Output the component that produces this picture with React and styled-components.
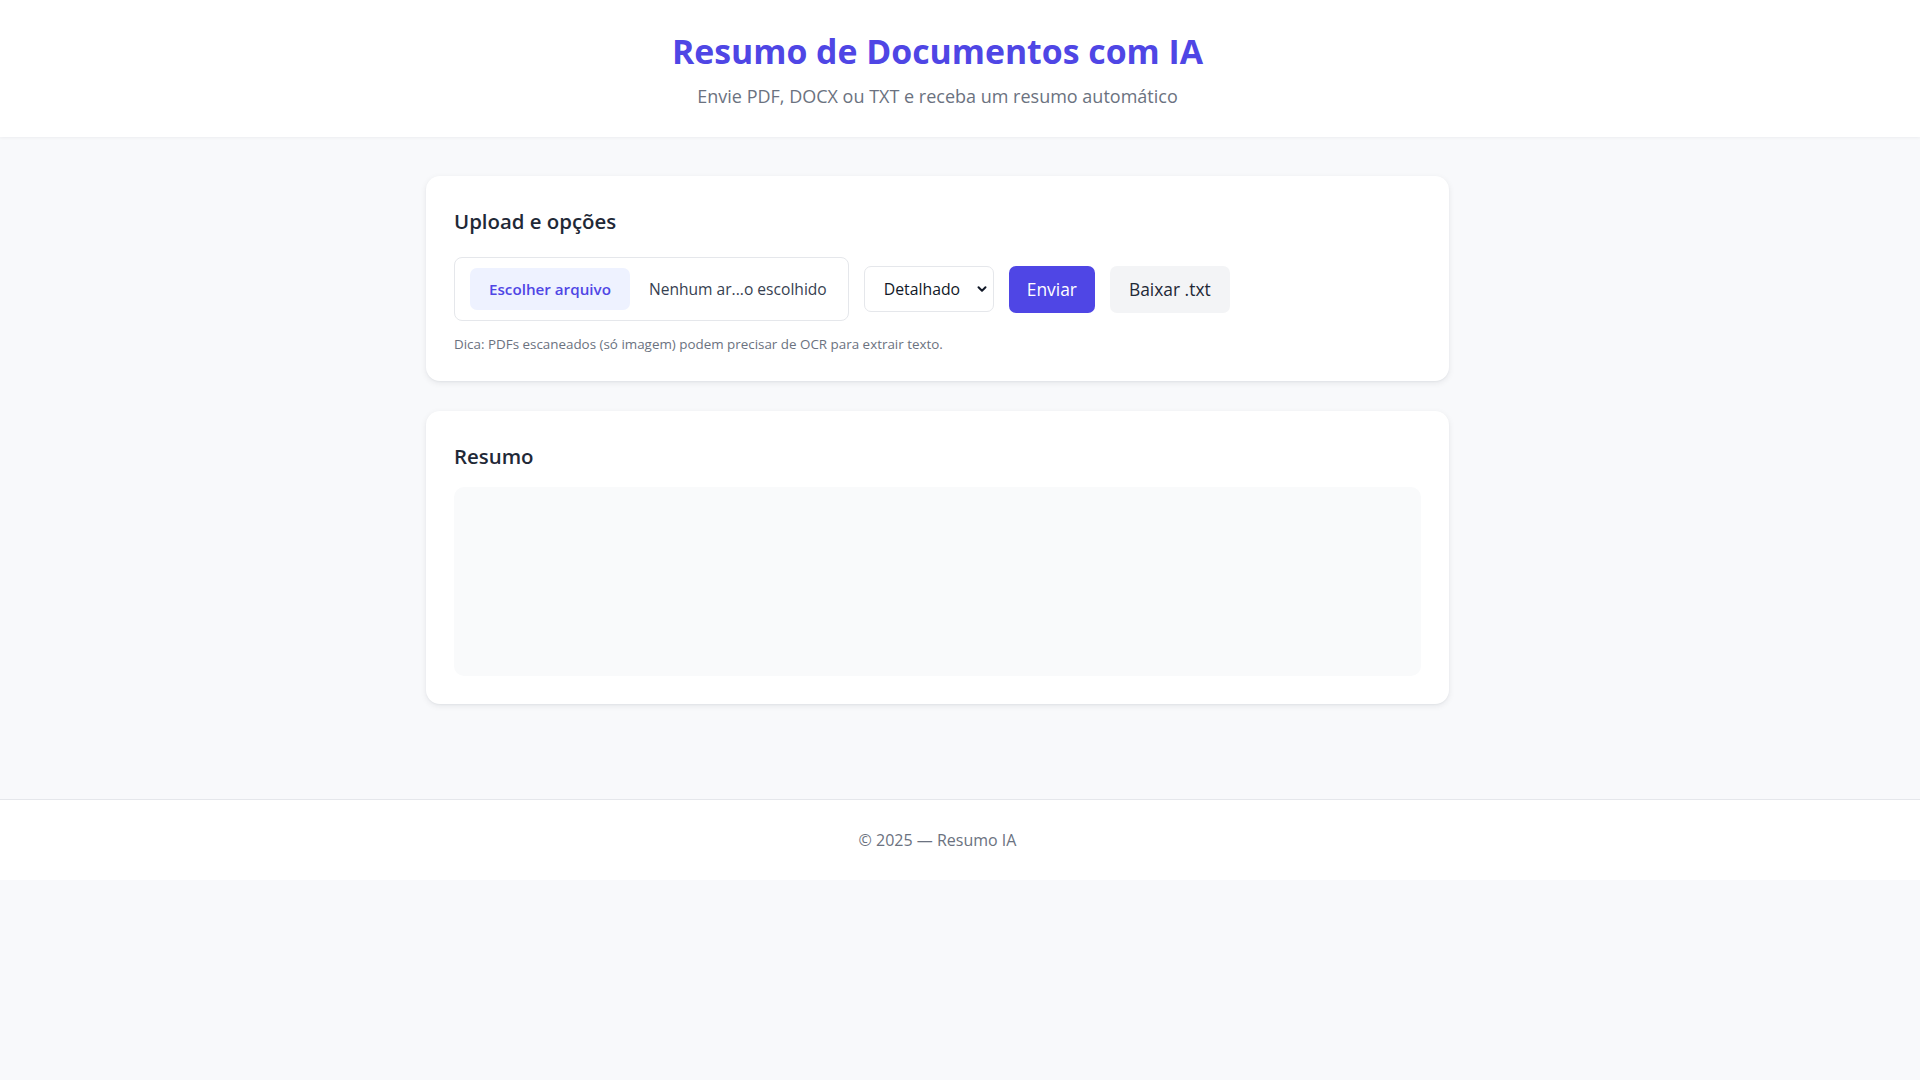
import React, { useState } from 'react';
import styled, { createGlobalStyle } from 'styled-components';
import { ChevronDown } from 'lucide-react';

const GlobalStyle = createGlobalStyle`
  * { box-sizing: border-box; }
  body {
    margin: 0;
    background: #f8f9fb;
    font-family: "Open Sans", "Noto Sans", sans-serif;
    color: #1f2937;
  }
`;

const Header = styled.header`
  background: #ffffff;
  box-shadow: 0 1px 3px rgba(15, 23, 42, 0.05);
  padding: 27px 45px 28px 0;
  text-align: center;
`;

const Title = styled.h1`
  margin: 0;
  font-size: 33.8px;
  line-height: 48px;
  font-weight: 700;
  color: #4f46e5;
`;

const Subtitle = styled.p`
  margin: 8px 0 0;
  font-size: 18px;
  line-height: 26px;
  color: #6b7280;
`;

const Main = styled.main`
  padding: 39px 45px 95px 0;
`;

const Container = styled.div`
  max-width: 1023px;
  margin: 0 auto;
  display: flex;
  flex-direction: column;
  gap: 30px;
`;

const Card = styled.section`
  background: #ffffff;
  border-radius: 14px;
  padding: 30px 28px 28px;
  box-shadow: 0 2px 6px rgba(15, 23, 42, 0.08), 0 1px 2px rgba(15, 23, 42, 0.04);
`;

const CardTitle = styled.h2`
  margin: 0 0 ${(p) => p.$gap || 16}px;
  font-size: 20.4px;
  line-height: 30px;
  font-weight: 600;
  color: #1f2937;
`;

const Row = styled.div`
  display: flex;
  align-items: center;
  gap: 15px;
`;

const FileBox = styled.label`
  display: flex;
  align-items: center;
  gap: 19px;
  padding: 10px 21px 10px 15px;
  border: 1px solid #e5e7eb;
  border-radius: 8px;
  background: #ffffff;
  cursor: pointer;
`;

const FileButton = styled.span`
  display: inline-flex;
  align-items: center;
  height: 42px;
  padding: 0 19px;
  border-radius: 7px;
  background: #eef2ff;
  color: #4f46e5;
  font-size: 15.2px;
  font-weight: 600;
`;

const FileName = styled.span`
  font-size: 15.6px;
  color: #374151;
`;

const SelectWrap = styled.div`
  position: relative;
`;

const Select = styled.select`
  appearance: none;
  height: 46px;
  width: 130px;
  padding: 0 30px 0 19px;
  border: 1px solid #e5e7eb;
  border-radius: 7px;
  background: #ffffff;
  font-family: inherit;
  font-size: 15.8px;
  color: #111827;
`;

const Chevron = styled(ChevronDown)`
  position: absolute;
  right: 5px;
  top: 50%;
  transform: translateY(-50%);
  pointer-events: none;
  color: #111827;
`;

const Button = styled.button`
  height: 47px;
  padding: 0 ${(p) => (p.$primary ? 18 : 19)}px;
  border: none;
  border-radius: 7px;
  font-family: inherit;
  font-size: 17.4px;
  cursor: pointer;
  background: ${(p) => (p.$primary ? '#4f46e5' : '#f3f4f6')};
  color: ${(p) => (p.$primary ? '#ffffff' : '#1f2937')};
`;

const Hint = styled.p`
  margin: 14px 0 0;
  font-size: 13.4px;
  line-height: 18px;
  color: #6b7280;
`;

const SummaryBox = styled.div`
  height: 189px;
  border-radius: 10px;
  background: #f9fafb;
  padding: 16px;
  font-size: 15px;
  line-height: 24px;
  color: #374151;
  white-space: pre-wrap;
`;

const Footer = styled.footer`
  background: #ffffff;
  border-top: 1px solid #e5e7eb;
  padding: 28px 45px 28px 0;
  text-align: center;
  font-size: 16px;
  line-height: 24px;
  color: #6b7280;
`;

export default function App() {
  const [mode, setMode] = useState('detalhado');
  const [summary] = useState('');

  return (
    <>
      <GlobalStyle />
      <Header>
        <Title>Resumo de Documentos com IA</Title>
        <Subtitle>Envie PDF, DOCX ou TXT e receba um resumo automático</Subtitle>
      </Header>
      <Main>
        <Container>
          <Card>
            <CardTitle $gap={21}>Upload e opções</CardTitle>
            <Row>
              <FileBox>
                <FileButton>Escolher arquivo</FileButton>
                <FileName>Nenhum ar...o escolhido</FileName>
              </FileBox>
              <SelectWrap>
                <Select value={mode} onChange={(e) => setMode(e.target.value)}>
                  <option value="curto">Curto</option>
                  <option value="detalhado">Detalhado</option>
                </Select>
                <Chevron size={14} strokeWidth={3.4} />
              </SelectWrap>
              <Button $primary>Enviar</Button>
              <Button>Baixar .txt</Button>
            </Row>
            <Hint>Dica: PDFs escaneados (só imagem) podem precisar de OCR para extrair texto.</Hint>
          </Card>
          <Card>
            <CardTitle>Resumo</CardTitle>
            <SummaryBox>{summary}</SummaryBox>
          </Card>
        </Container>
      </Main>
      <Footer>© 2025 — Resumo IA</Footer>
    </>
  );
}
